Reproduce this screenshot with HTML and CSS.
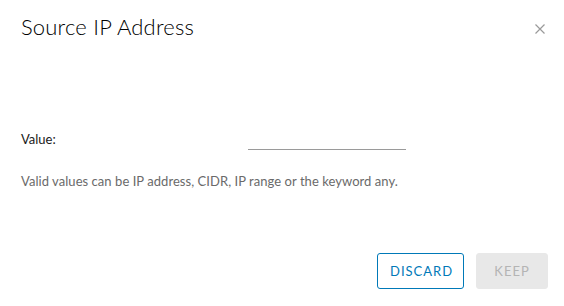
FILE: index.html
```html
<!DOCTYPE html>
<html>
<head>
<meta charset="utf-8">
<link rel="stylesheet" href="styles.css">
</head>
<body>
<div class="modal">
  <div class="modal-header">
    <h3 class="modal-title">Source IP Address</h3>
    <button class="close" aria-label="Close">
      <svg width="10" height="10" viewBox="0 0 10 10"><path d="M0.5 0.5 L9.5 9.5 M9.5 0.5 L0.5 9.5" stroke="#9a9a9a" stroke-width="1.2" fill="none"/></svg>
    </button>
  </div>
  <div class="modal-body">
    <div class="form-row">
      <label class="label">Value:</label>
      <input class="text-input" type="text">
    </div>
    <p class="helper">Valid values can be IP address, CIDR, IP range or the keyword any.</p>
  </div>
  <div class="modal-footer">
    <button class="btn btn-outline">DISCARD</button>
    <button class="btn btn-disabled">KEEP</button>
  </div>
</div>
</body>
</html>
```

FILE: styles.css
```css
html, body {
  margin: 0;
  padding: 0;
  background: #ffffff;
}
body {
  font-family: "Lato", "Open Sans", sans-serif;
  color: #313131;
}
.modal {
  width: 564px;
  height: 306px;
  box-sizing: border-box;
  padding: 0 16px 0 21px;
  display: flex;
  flex-direction: column;
}
.modal-header {
  display: flex;
  align-items: flex-start;
  justify-content: space-between;
  padding-top: 13px;
}
.modal-title {
  margin: 0;
  font-weight: 300;
  font-size: 22px;
  line-height: 28px;
  color: #000;
  letter-spacing: 0.2px;
}
.close {
  background: none;
  border: 0;
  padding: 0;
  margin: 11px 3px 0 0;
  width: 10px;
  height: 10px;
  display: flex;
}
.modal-body {
  flex: 1;
  padding-top: 90px;
}
.form-row {
  display: flex;
  align-items: flex-start;
}
.label {
  width: 227px;
  font-size: 13px;
  line-height: 16px;
  color: #1a1a1a;
}
.text-input {
  width: 158px;
  height: 18px;
  border: 0;
  border-bottom: 1px solid #9a9a9a;
  padding: 0;
  margin-top: 0;
  outline: none;
  box-sizing: content-box;
}
.helper {
  margin: 23px 0 0 0;
  font-size: 13px;
  line-height: 16px;
  color: #6a6a6a;
  letter-spacing: 0.05px;
}
.modal-footer {
  display: flex;
  justify-content: flex-end;
  gap: 12px;
  padding-bottom: 17px;
}
.btn {
  height: 36px;
  box-sizing: border-box;
  border-radius: 3px;
  font-family: "Lato", sans-serif;
  font-size: 13px;
  letter-spacing: 1px;
  font-weight: 400;
  padding: 0 12px;
}
.btn-outline {
  width: 87px;
  background: #fff;
  border: 1px solid #0079b8;
  color: #0079b8;
}
.btn-disabled {
  width: 72px;
  background: #e8e8e8;
  border: 1px solid #e8e8e8;
  color: #b4b4b4;
}
```
